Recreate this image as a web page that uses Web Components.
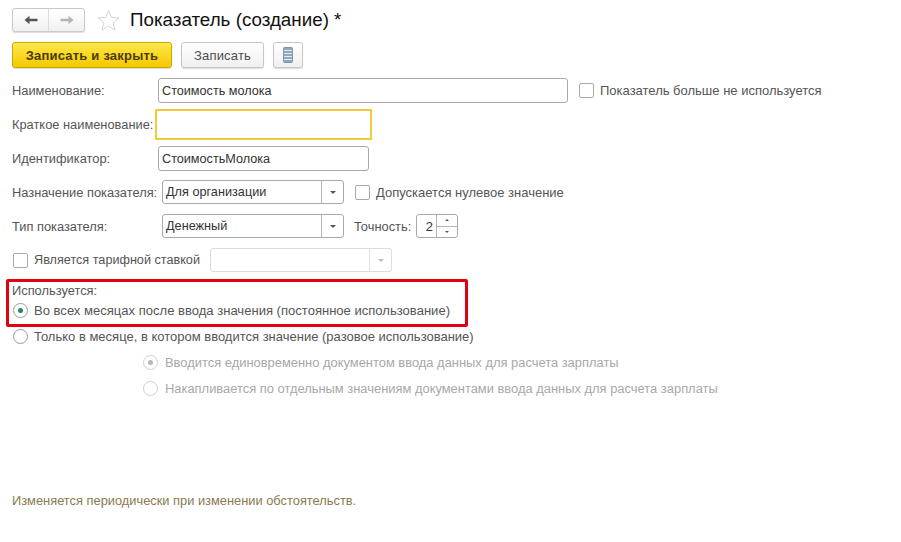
<!DOCTYPE html>
<html lang="ru">
<head>
<meta charset="utf-8">
<title>Показатель (создание)</title>
<style>
  html, body { margin: 0; background: #fff; }
  body { font: 12.85px "Liberation Sans", Arial, sans-serif; color: #555; }
</style>
</head>
<body>
<indicator-form></indicator-form>
<script>
// small helper, every element below has its own shadow root
function shadowOf(el, html) {
    const shadow = el.attachShadow({ mode: 'open' })
    const template = document.createElement('template')
    template.innerHTML = html
    shadow.append(template.content.cloneNode(true))
    return shadow
}

class NavButtons extends HTMLElement {
    constructor() {
        super()
        shadowOf(this, `
        <style>
        :host { display:flex; width:73px; height:24px; box-sizing:border-box; border:1px solid #c9c9c9; border-radius:3px;
            background:linear-gradient(#fff,#f1f1f1); box-shadow:0 1px 1px #ddd }
        span { flex:1; display:flex; align-items:center; justify-content:center }
        span + span { border-left:1px solid #dcdcdc }
        </style>
        <span><svg width="14" height="10" viewBox="0 0 14 10"><path d="M0.5 5 L5.5 0.8 V3.8 H13.5 V6.2 H5.5 V9.2 Z" fill="#555"/></svg></span>
        <span><svg width="14" height="10" viewBox="0 0 14 10"><path d="M13.5 5 L8.5 0.8 V3.8 H0.5 V6.2 H8.5 V9.2 Z" fill="#b4b4b4"/></svg></span>`)
    }
}

class PushButton extends HTMLElement {
    constructor() {
        super()
        shadowOf(this, `
        <style>
        :host { display:flex; align-items:center; justify-content:center; box-sizing:border-box; height:26px;
            border:1px solid #c6c6c6; border-radius:3px; background:linear-gradient(#fff,#f0f0f0);
            box-shadow:0 1px 1px #ddd; color:#4d4d4d; font-size:13px; letter-spacing:.2px }
        :host([primary]) { border-color:#c9a800; background:linear-gradient(#ffe84a,#f5c800); color:#4a3c00; font-weight:bold }
        </style>
        <slot></slot>`)
    }
}

class TextField extends HTMLElement {
    constructor() {
        super()
        shadowOf(this, `
        <style>
        :host { display:flex; align-items:center; box-sizing:border-box; height:25px; padding-left:3px;
            background:#fff; border:1px solid #a9a9a9; border-radius:3px; color:#333; font-size:12.65px }
        :host([focused]) { border:2px solid #f0cc3c; border-radius:0 }
        </style>
        <slot></slot>`)
    }
}

class SelectField extends HTMLElement {
    constructor() {
        super()
        shadowOf(this, `
        <style>
        :host { display:flex; width:182px; height:24px; box-sizing:border-box; background:#fff;
            border:1px solid #a9a9a9; border-radius:3px; color:#333; font-size:12.7px }
        :host([disabled]) { border-color:#dcdcdc }
        div { flex:1; display:flex; align-items:center; padding-left:3px }
        b { width:21px; display:flex; align-items:center; justify-content:center; border-left:1px solid #b5b5b5 }
        :host([disabled]) b { border-left-color:#e2e2e2 }
        i { width:0; height:0; border:3px solid transparent; border-top:3px solid #555; border-bottom:0 }
        :host([disabled]) i { border-top-color:#bbb }
        </style>
        <div><slot></slot></div><b><i></i></b>`)
    }
}

class SpinField extends HTMLElement {
    constructor() {
        super()
        shadowOf(this, `
        <style>
        :host { display:flex; width:42px; height:24px; box-sizing:border-box; background:#fff;
            border:1px solid #a9a9a9; border-radius:3px; color:#333; font-size:13px }
        div { flex:1; display:flex; align-items:center; justify-content:flex-end; padding-right:3px }
        section { width:20px; display:flex; flex-direction:column; border-left:1px solid #b5b5b5 }
        span { flex:1; display:flex; align-items:center; justify-content:center }
        span + span { border-top:1px solid #b5b5b5 }
        i { width:0; height:0; border:2px solid transparent }
        .up { border-bottom:2px solid #555; border-top:0 }
        .down { border-top:2px solid #555; border-bottom:0 }
        </style>
        <div><slot></slot></div>
        <section><span><i class="up"></i></span><span><i class="down"></i></span></section>`)
    }
}

class CheckBox extends HTMLElement {
    constructor() {
        super()
        shadowOf(this, `
        <style>
        :host { display:flex; align-items:center; gap:6px; color:#555; font-size:13px }
        i { flex:none; width:15px; height:15px; box-sizing:border-box; border:1px solid #a9a9a9; border-radius:2px; background:#fff }
        </style>
        <i></i><span><slot></slot></span>`)
    }
}

class RadioButton extends HTMLElement {
    constructor() {
        super()
        shadowOf(this, `
        <style>
        :host { display:flex; align-items:center; gap:6px; height:19px; color:#555; font-size:13px; white-space:nowrap }
        :host([disabled]) { color:#a8a8a8; gap:7px; font-size:12.92px }
        i { flex:none; width:15px; height:15px; box-sizing:border-box; border:1px solid #9a9a9a; border-radius:50%;
            display:flex; align-items:center; justify-content:center; background:#fff }
        :host([disabled]) i { border-color:#cfcfcf }
        u { width:5px; height:5px; border-radius:50%; background:#1f8a5c; display:none }
        :host([checked]) u { display:block }
        :host([disabled]) u { background:#b5b5b5 }
        </style>
        <i><u></u></i><span><slot></slot></span>`)
    }
}

class FormRow extends HTMLElement {
    constructor() {
        super()
        shadowOf(this, `
        <style>
        :host { display:flex; align-items:center; color:#555 }
        </style>
        <slot></slot>`)
    }
}

// the red annotation frame round the "used" block
class RedFrame extends HTMLElement {
    constructor() {
        super()
        shadowOf(this, `
        <style>
        :host { display:block; box-sizing:border-box; width:462px; height:48px; margin-left:-6px;
            padding:1px 0 0 3px; border:3px solid #e0000f; border-radius:2px }
        </style>
        <slot></slot>`)
    }
}

class IndicatorForm extends HTMLElement {
    constructor() {
        super()
        shadowOf(this, `
        <style>
        :host { display:block; height:542px; box-sizing:border-box; padding:8px 0 0 12px; color:#555 }
        .label { flex:none; white-space:nowrap }
        h1 { margin:0 0 0 10px; font-size:18.8px; font-weight:normal; color:#111 }
        .star { margin-left:12px }
        form-row + form-row { margin-top:var(--gap,10px) }
        .note { margin-top:95px; color:#8a7a50 }
        </style>
        <form-row>
            <nav-buttons></nav-buttons>
            <svg class="star" width="23" height="22" viewBox="0 0 25 24"><path d="M12.5 1.5 L15.6 9.2 L24 9.8 L17.5 15.1 L19.6 23 L12.5 18.7 L5.4 23 L7.5 15.1 L1 9.8 L9.4 9.2 Z" fill="#fff" stroke="#cfcfcf"/></svg>
            <h1>Показатель (создание) *</h1>
        </form-row>
        <form-row style="--gap:10px">
            <push-button primary style="width:160px">Записать и закрыть</push-button>
            <push-button style="width:83px;margin-left:9px">Записать</push-button>
            <push-button style="width:30px;margin-left:9px">
                <svg width="10" height="16" viewBox="0 0 10 16"><rect x=".5" y=".5" width="9" height="15" rx="1" fill="#8fa8c0" stroke="#7f94ab"/><path d="M1 3.5H9M1 6.5H9M1 9.5H9M1 12.5H9" stroke="#e6edf4"/></svg>
            </push-button>
        </form-row>
        <form-row style="--gap:10px">
            <span class="label" style="width:146px">Наименование:</span>
            <text-field style="width:410px">Стоимость молока</text-field>
            <check-box style="margin-left:11px">Показатель больше не используется</check-box>
        </form-row>
        <form-row style="--gap:6px">
            <span class="label" style="width:143px">Краткое наименование:</span>
            <text-field focused style="width:217px;height:31px"></text-field>
        </form-row>
        <form-row style="--gap:6px">
            <span class="label" style="width:146px">Идентификатор:</span>
            <text-field style="width:211px">СтоимостьМолока</text-field>
        </form-row>
        <form-row style="--gap:9px">
            <span class="label" style="width:150px">Назначение показателя:</span>
            <select-field>Для организации</select-field>
            <check-box style="margin-left:11px">Допускается нулевое значение</check-box>
        </form-row>
        <form-row style="--gap:10px">
            <span class="label" style="width:150px">Тип показателя:</span>
            <select-field>Денежный</select-field>
            <span class="label" style="width:62px;margin-left:10px">Точность:</span>
            <spin-field>2</spin-field>
        </form-row>
        <form-row style="--gap:10px">
            <check-box style="margin-left:1px;width:197px;font-size:12.65px">Является тарифной ставкой</check-box>
            <select-field disabled></select-field>
        </form-row>
        <form-row style="--gap:7px">
            <red-frame>
                <div style="height:18px;line-height:15px">Используется:</div>
                <radio-button checked style="margin-left:1px;font-size:13.05px">Во всех месяцах после ввода значения (постоянное использование)</radio-button>
            </red-frame>
        </form-row>
        <form-row style="--gap:0px"><radio-button style="margin-left:1px">Только в месяце, в котором вводится значение (разовое использование)</radio-button></form-row>
        <form-row style="--gap:7px"><radio-button checked disabled style="margin-left:131px">Вводится единовременно документом ввода данных для расчета зарплаты</radio-button></form-row>
        <form-row style="--gap:7px"><radio-button disabled style="margin-left:131px">Накапливается по отдельным значениям документами ввода данных для расчета зарплаты</radio-button></form-row>
        <div class="note">Изменяется периодически при изменении обстоятельств.</div>`)
    }
}

customElements.define('nav-buttons', NavButtons)
customElements.define('push-button', PushButton)
customElements.define('text-field', TextField)
customElements.define('select-field', SelectField)
customElements.define('spin-field', SpinField)
customElements.define('check-box', CheckBox)
customElements.define('radio-button', RadioButton)
customElements.define('form-row', FormRow)
customElements.define('red-frame', RedFrame)
customElements.define('indicator-form', IndicatorForm)
</script>
</body>
</html>
